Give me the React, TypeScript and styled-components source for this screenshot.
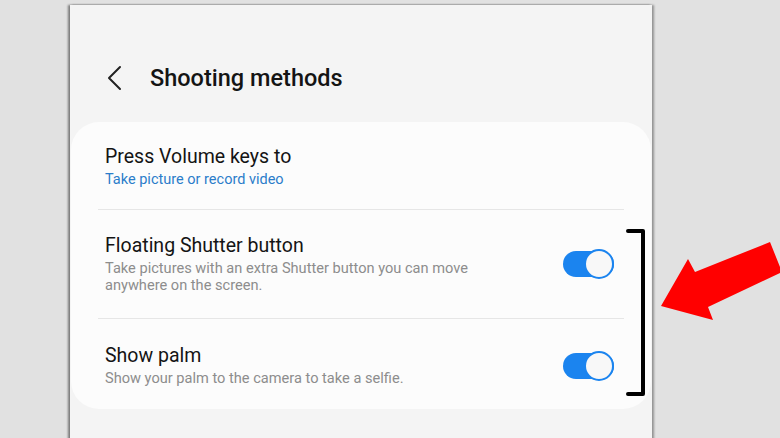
import styled, { createGlobalStyle } from "styled-components"

const GlobalStyle = createGlobalStyle`
    html, body {
        margin: 0;
        padding: 0;
        background: #e1e1e1;
        font-family: Roboto, "Liberation Sans", sans-serif;
    }
`

const Page = styled.div`
    position: relative;
    width: 780px;
    height: 438px;
    overflow: hidden;
    padding: 5px 0 0 70px;
    box-sizing: border-box;
`

const Screen = styled.div`
    width: 582px;
    height: 440px;
    background: #f4f4f4;
    box-shadow: -2px 0 2px rgba(0, 0, 0, 0.45), 2px 0 2px rgba(0, 0, 0, 0.35);
    display: flex;
    flex-direction: column;
`

const Header = styled.div`
    display: flex;
    align-items: center;
    gap: 27px;
    height: 44px;
    padding: 51px 0 0 37px;
    margin-bottom: 22px;
`

const Title = styled.h1`
    margin: 0;
    font-size: 23.5px;
    font-weight: 500;
    color: #141414;
    line-height: 44px;
`

const Card = styled.div`
    margin: 0 1px;
    background: #fcfcfc;
    border-radius: 28px;
`

const Row = styled.div<{ $top: number; $bottom: number }>`
    display: flex;
    align-items: center;
    justify-content: space-between;
    padding: ${p => p.$top}px 37px ${p => p.$bottom}px 34px;
`

const TextCol = styled.div`
    display: flex;
    flex-direction: column;
    max-width: 400px;
`

const RowTitle = styled.div`
    font-size: 19.5px;
    line-height: 24px;
    color: #141414;
`

const Link = styled.div`
    margin-top: 2px;
    font-size: 14.5px;
    line-height: 18px;
    color: #2b7dca;
`

const Desc = styled.div`
    margin-top: 2px;
    font-size: 14.6px;
    line-height: 17px;
    color: #8d8d8d;
`

const Divider = styled.div`
    height: 1px;
    margin: 0 27px;
    background: #e6e6e6;
`

const Track = styled.div`
    position: relative;
    width: 51px;
    height: 26px;
    border-radius: 13px;
    background: #1b84ef;
    flex-shrink: 0;
`

const Thumb = styled.div`
    position: absolute;
    right: 0;
    top: -2px;
    width: 26px;
    height: 26px;
    border-radius: 50%;
    border: 2px solid #1b84ef;
    background: #f8f8f8;
`

const Overlay = styled.svg`
    position: absolute;
    left: 0;
    top: 0;
    pointer-events: none;
`

const Chevron = () => (
    <svg width="16" height="26" viewBox="0 0 16 26">
        <path d="M13 2 L2 13 L13 24" fill="none" stroke="#222" strokeWidth="2" strokeLinecap="round" strokeLinejoin="round" />
    </svg>
)

const Toggle = () => (
    <Track>
        <Thumb />
    </Track>
)

const App = () => {
    return (
        <>
            <GlobalStyle />
            <Page>
                <Screen>
                    <Header>
                        <Chevron />
                        <Title>Shooting methods</Title>
                    </Header>
                    <Card>
                        <Row $top={23} $bottom={20}>
                            <TextCol>
                                <RowTitle>Press Volume keys to</RowTitle>
                                <Link>Take picture or record video</Link>
                            </TextCol>
                        </Row>
                        <Divider />
                        <Row $top={24} $bottom={24}>
                            <TextCol>
                                <RowTitle>Floating Shutter button</RowTitle>
                                <Desc>Take pictures with an extra Shutter button you can move anywhere on the screen.</Desc>
                            </TextCol>
                            <Toggle />
                        </Row>
                        <Divider />
                        <Row $top={25} $bottom={22}>
                            <TextCol>
                                <RowTitle>Show palm</RowTitle>
                                <Desc>Show your palm to the camera to take a selfie.</Desc>
                            </TextCol>
                            <Toggle />
                        </Row>
                    </Card>
                </Screen>
                <Overlay width="780" height="438" viewBox="0 0 780 438">
                    <path d="M628 231 H643 V394 H628" fill="none" stroke="#000" strokeWidth="4" strokeLinecap="round" strokeLinejoin="round" />
                    <polygon points="661,306 688,259 695,272 770,242 782,272 708,307 713,320" fill="#ff0000" />
                </Overlay>
            </Page>
        </>
    )
}

export default App
